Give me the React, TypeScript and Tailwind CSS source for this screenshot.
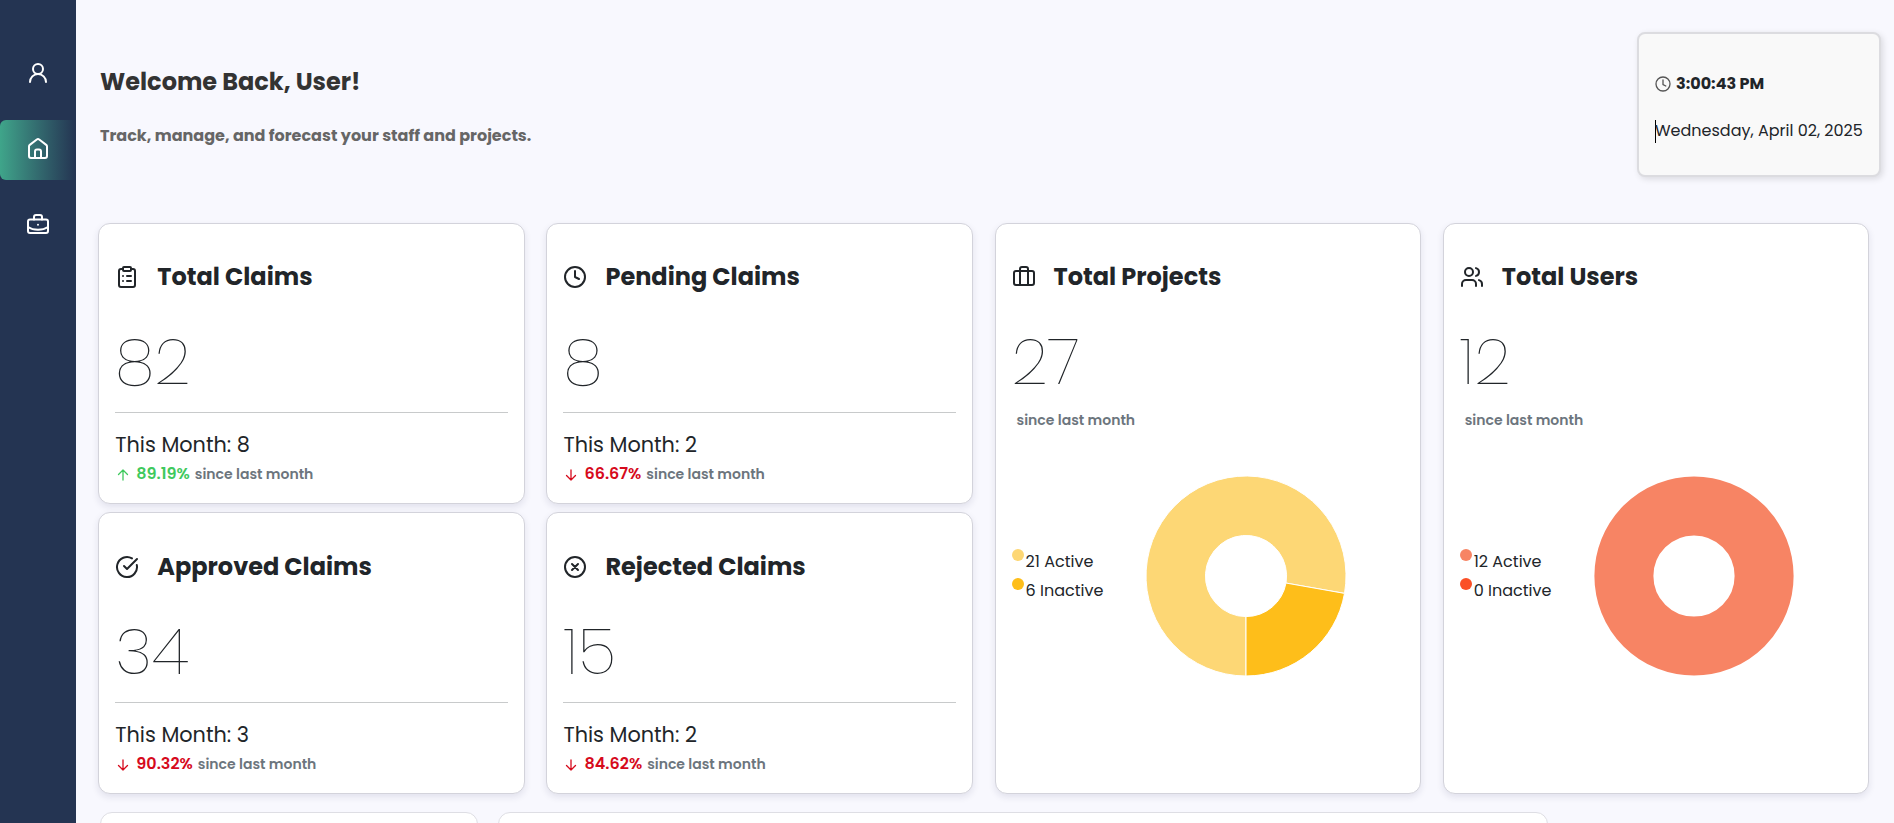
import React from "react";

const pt = "font-['Poppins','Inter',sans-serif]";

type IconProps = { className?: string; children: React.ReactNode };
function Icon({ className = "", children }: IconProps) {
  return (
    <svg viewBox="0 0 24 24" fill="none" stroke="currentColor" strokeWidth="2" strokeLinecap="round" strokeLinejoin="round" className={`shrink-0 ${className}`}>
      {children}
    </svg>
  );
}

const icons = {
  clipboard: (
    <>
      <rect x="8" y="2" width="8" height="4" rx="1" />
      <path d="M16 4h2a2 2 0 0 1 2 2v14a2 2 0 0 1-2 2H6a2 2 0 0 1-2-2V6a2 2 0 0 1 2-2h2M12 11h4M12 16h4M8 11h.01M8 16h.01" />
    </>
  ),
  clock: (
    <>
      <circle cx="12" cy="12" r="10" />
      <path d="M12 6v6l4 2" />
    </>
  ),
  check: (
    <>
      <path d="M21.801 10A10 10 0 1 1 17 3.335" />
      <path d="m9 11 3 3L22 4" />
    </>
  ),
  cross: (
    <>
      <circle cx="12" cy="12" r="10" />
      <path d="m9 9 6 6M15 9l-6 6" />
    </>
  ),
  projects: (
    <>
      <rect x="2" y="6" width="20" height="14" rx="2" />
      <path d="M16 20V4a2 2 0 0 0-2-2h-4a2 2 0 0 0-2 2v16" />
    </>
  ),
  users: (
    <>
      <circle cx="9" cy="7" r="4" />
      <path d="M16 21v-2a4 4 0 0 0-4-4H6a4 4 0 0 0-4 4v2M22 21v-2a4 4 0 0 0-3-3.870M16 3.130a4 4 0 0 1 0 7.750" />
    </>
  ),
};

function CardTitle({ icon, title }: { icon: keyof typeof icons; title: string }) {
  return (
    <div className="flex h-[30px] items-center">
      <Icon className="h-6 w-6">{icons[icon]}</Icon>
      <h2 className="ml-[18px] text-2xl leading-[30px] font-bold whitespace-nowrap">{title}</h2>
    </div>
  );
}

function BigNumber({ value }: { value: string }) {
  return <p className="mt-[35px] h-[69px] text-[64px] leading-[69px] font-thin">{value}</p>;
}

type ClaimProps = { icon: keyof typeof icons; title: string; value: string; month: string; pct: string; up?: boolean };
function ClaimCard({ icon, title, value, month, pct, up }: ClaimProps) {
  return (
    <section className="flex flex-col justify-end rounded-xl border border-[#d3d3db] bg-white px-4 pb-[15px] shadow-[0_3px_7px_rgba(30,30,80,0.10)]">
      <CardTitle icon={icon} title={title} />
      <BigNumber value={value} />
      <div className="mt-4 h-px bg-[#c8cacb]" />
      <p className="mt-[17px] h-[30px] text-[20.8px] leading-[30px]">This Month: {month}</p>
      <div className="flex h-7 items-center">
        <svg viewBox="0 0 16 16" fill="none" stroke="currentColor" strokeWidth="1.300" strokeLinecap="round" strokeLinejoin="round" className={`mt-0.5 h-4 w-4 ${up ? "text-[#3fc95d]" : "text-[#d60a1c]"}`}>
          <path d={up ? "M8 13V3M3.500 7.500 8 3l4.500 4.500" : "M8 3v10M3.500 8.500 8 13l4.500-4.500"} />
        </svg>
        <span className={`ml-[5px] text-base font-semibold ${up ? "text-[#3fc95d]" : "text-[#d60a1c]"}`}>{pct}</span>
        <span className="ml-[5px] text-sm font-semibold text-[#6c757d]">since last month</span>
      </div>
    </section>
  );
}

type DonutProps = { icon: keyof typeof icons; title: string; value: string; legend: { label: string; dot: string }[]; children: React.ReactNode };
function DonutCard({ icon, title, value, legend, children }: DonutProps) {
  return (
    <section className="row-span-2 rounded-xl border border-[#d3d3db] bg-white px-4 pt-[38px] shadow-[0_3px_7px_rgba(30,30,80,0.10)]">
      <CardTitle icon={icon} title={title} />
      <BigNumber value={value} />
      <p className="mt-[13px] ml-[5px] h-[22px] text-sm leading-[22px] font-semibold text-[#6c757d]">since last month</p>
      <div className="mt-[45px] flex h-[201px]">
        <ul className="w-[134px] pt-[72px]">
          {legend.map((l) => (
            <li key={l.label} className="flex h-[29px]">
              <span className={`mt-px h-3 w-3 rounded-full ${l.dot}`} />
              <span className="ml-0.5 text-base leading-[27px]">{l.label}</span>
            </li>
          ))}
        </ul>
        <svg viewBox="-100 -100 200 200" className="h-[200px] w-[200px] overflow-visible" stroke="white" strokeWidth="1">
          {children}
        </svg>
      </div>
    </section>
  );
}

export default function App() {
  return (
    <div className={`flex h-[823px] overflow-hidden bg-[#f8f8fe] text-[#212529] ${pt}`}>
      <nav className="flex w-[76px] shrink-0 flex-col bg-[#243452] pt-[43px] text-white">
        <a className="flex h-[60px] items-center justify-center">
          <Icon className="h-6 w-6">
            <circle cx="12" cy="8" r="5" />
            <path d="M4 21a8 8 0 0 1 16 0" />
          </Icon>
        </a>
        <a className="mt-[17px] flex h-[60px] items-center justify-center rounded-l-md bg-linear-to-r from-[#3fa58a] to-[#243452] pb-0.5">
          <Icon className="h-6 w-6">
            <path d="M3 9.500a2 2 0 0 1 .8-1.600L10.800 2.500a2 2 0 0 1 2.400 0l7 5.400a2 2 0 0 1 .8 1.600V19a2 2 0 0 1-2 2H5a2 2 0 0 1-2-2zM9 21v-6.500a2 2 0 0 1 2-2h2a2 2 0 0 1 2 2V21" />
          </Icon>
        </a>
        <a className="mt-[14px] flex h-[60px] items-center justify-center">
          <Icon className="h-6 w-6">
            <rect x="2" y="7.500" width="20" height="13.500" rx="2" />
            <path d="M8 7.500V5a2 2 0 0 1 2-2h4a2 2 0 0 1 2 2v2.500M2 15c5.500 3.600 14.500 3.600 20 0M12 12.800v.01" />
          </Icon>
        </a>
      </nav>
      <main className="min-w-0 flex-1">
        <header className="flex h-[223px] justify-between pl-6">
          <div>
            <h1 className="mt-[67px] h-[30px] text-2xl leading-[30px] font-bold text-[#333]">Welcome Back, User!</h1>
            <p className="mt-[27px] text-base leading-6 font-bold text-[#666]">Track, manage, and forecast your staff and projects.</p>
          </div>
          <div className="mt-8 mr-[13px] flex h-[145px] w-[244px] flex-col rounded-lg border-2 border-[#dcdce0] bg-[#f9f9f9] pl-4 shadow-[2px_2px_6px_rgba(0,0,0,0.12)]">
            <div className="mt-[38px] flex h-6 items-center">
              <svg viewBox="0 0 16 16" fill="none" stroke="#555" strokeWidth="1.300" strokeLinecap="round" className="h-4 w-4">
                <circle cx="8" cy="8" r="7" />
                <path d="M8 4v4.500l2.800 1.500" />
              </svg>
              <span className="ml-[5px] text-base leading-6 font-bold">3:00:43 PM</span>
            </div>
            <div className="mt-[23px] flex h-6 items-center">
              <span className="-mr-px h-[23px] w-px shrink-0 bg-black" />
              <span className="text-base leading-6 whitespace-nowrap">Wednesday, April 02, 2025</span>
            </div>
          </div>
        </header>
        <div className="ml-[22.300px] grid w-[1770.700px] grid-cols-4 grid-rows-[281px_282px] gap-x-[21.900px] gap-y-2">
          <ClaimCard icon="clipboard" title="Total Claims" value="82" month="8" pct="89.19%" up />
          <ClaimCard icon="clock" title="Pending Claims" value="8" month="2" pct="66.67%" />
          <DonutCard icon="projects" title="Total Projects" value="27" legend={[{ label: "21 Active", dot: "bg-[#fdd775]" }, { label: "6 Inactive", dot: "bg-[#febe1a]" }]}>
            <path d="M0 100A100 100 0 1 1 98.500 17.400L40 7.050A40.600 40.600 0 1 0 0 40.600Z" fill="#fdd775" />
            <path d="M98.500 17.400A100 100 0 0 1 0 100V40.600A40.600 40.600 0 0 0 40 7.050Z" fill="#febe1a" />
          </DonutCard>
          <DonutCard icon="users" title="Total Users" value="12" legend={[{ label: "12 Active", dot: "bg-[#f78464]" }, { label: "0 Inactive", dot: "bg-[#fb5026]" }]}>
            <circle r="70.100" fill="none" stroke="#f78464" strokeWidth="59" />
          </DonutCard>
          <ClaimCard icon="check" title="Approved Claims" value="34" month="3" pct="90.32%" />
          <ClaimCard icon="cross" title="Rejected Claims" value="15" month="2" pct="84.62%" />
        </div>
        <div className="mt-[18px] ml-6 flex gap-5">
          <div className="h-40 w-[378px] shrink-0 rounded-xl border border-[#dedee4] bg-white" />
          <div className="h-40 w-[1050px] shrink-0 rounded-xl border border-[#dedee4] bg-white" />
        </div>
      </main>
    </div>
  );
}
